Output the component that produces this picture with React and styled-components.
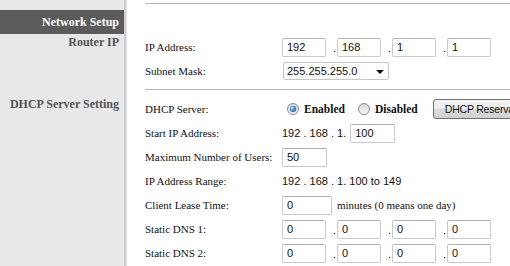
import React from "react";
import styled, { createGlobalStyle } from "styled-components";

const Global = createGlobalStyle`
  html, body { margin: 0; padding: 0; background: #ffffff; }
  body { font-family: "Liberation Serif", "Times New Roman", serif; color: #111; }
`;

const Page = styled.div`
  display: flex;
  height: 266px;
  width: 510px;
  overflow: hidden;
`;

const Sidebar = styled.div`
  flex: 0 0 124px;
  background: #e8e8e8;
  border-right: 2px solid #cfcfcf;
  box-shadow: 1px 0 1px #e4e4e4;
  padding-top: 10px;
  display: flex;
  flex-direction: column;
  font-family: "Liberation Serif", "Times New Roman", serif;
  font-weight: bold;
  font-size: 12px;
  text-align: right;
`;

const SideHeading = styled.div`
  background: #5b5b5b;
  color: #ffffff;
  height: 24px;
  line-height: 24px;
  padding-right: 5px;
`;

const SideItem = styled.div`
  color: #555555;
  line-height: 16px;
  padding-right: 5px;
  margin-top: ${(p) => p.$gap || 0}px;
`;

const Main = styled.div`
  flex: 1 1 auto;
  min-width: 0;
  padding: 3px 0 0 19px;
  overflow: hidden;
`;

const Rule = styled.div`
  height: 1px;
  background: #b4b4c4;
  margin-top: ${(p) => p.$top || 0}px;
  margin-right: -20px;
`;

const Section = styled.div`
  margin-top: ${(p) => p.$top || 0}px;
`;

const Row = styled.div`
  display: grid;
  grid-template-columns: 137px auto;
  align-items: center;
  height: 24px;
  white-space: nowrap;
`;

const Label = styled.div`
  font-family: "Liberation Serif", "Times New Roman", serif;
  font-size: 11px;
  color: #111;
`;

const Field = styled.div`
  display: flex;
  align-items: center;
  gap: ${(p) => p.$gap || 0}px;
`;

const Input = styled.input`
  box-sizing: border-box;
  width: ${(p) => p.$w || 44}px;
  height: 19px;
  margin: 0;
  padding: 0 4px;
  border: 1px solid #cacaca;
  border-top-color: #b2b2b2;
  border-radius: 2px;
  font-family: "Liberation Sans", Arial, sans-serif;
  font-size: 11px;
  color: #111;
  background: #fff;
  outline: none;
`;

const Dot = styled.span`
  box-sizing: border-box;
  width: 11px;
  padding-left: 7px;
  font-family: "Liberation Sans", Arial, sans-serif;
  font-size: 11px;
  line-height: 19px;
  padding-top: 2px;
`;

const Select = styled.div`
  box-sizing: border-box;
  width: 106px;
  height: 18px;
  margin-left: 1px;
  border: 1px solid #c6c6c6;
  border-radius: 2px;
  display: flex;
  align-items: center;
  justify-content: space-between;
  padding: 0 4px 0 3px;
  font-family: "Liberation Sans", Arial, sans-serif;
  font-size: 11px;
  color: #111;
  background: #fff;
`;

const Arrow = styled.span`
  width: 0;
  height: 0;
  border-left: 4px solid transparent;
  border-right: 4px solid transparent;
  border-top: 4px solid #111;
  margin-top: 2px;
`;

const Radio = styled.span`
  box-sizing: border-box;
  width: 12px;
  height: 12px;
  border-radius: 50%;
  border: 1px solid #8a8a8a;
  background: linear-gradient(#d6d6d6, #fbfbfb);
  display: inline-flex;
  align-items: center;
  justify-content: center;
  margin-left: ${(p) => p.$ml || 0}px;
  &::after {
    content: "";
    display: ${(p) => (p.$checked ? "block" : "none")};
    width: 6px;
    height: 6px;
    border-radius: 50%;
    background: radial-gradient(circle at 35% 35%, #bfe6ff 0%, #3d8fd8 45%, #10488a 100%);
    box-shadow: 0 0 1px #0c3a6e;
  }
`;

const RadioText = styled.span`
  font-family: "Liberation Serif", "Times New Roman", serif;
  font-weight: bold;
  font-size: 11.5px;
  margin-left: 5px;
  color: #111;
`;

const Button = styled.button`
  box-sizing: border-box;
  height: 20px;
  margin: 0 0 0 15px;
  padding: 0 11px;
  border: 1px solid #707070;
  border-radius: 3px;
  background: linear-gradient(#f3f3f3 0%, #ebebeb 50%, #dddddd 50%, #cfcfcf 100%);
  font-family: "Liberation Sans", Arial, sans-serif;
  font-size: 10.5px;
  letter-spacing: -0.2px;
  color: #111;
  white-space: nowrap;
  flex-shrink: 0;
`;

const Plain = styled.span`
  font-family: "Liberation Sans", Arial, sans-serif;
  font-size: 11px;
  color: #111;
`;

const Note = styled.span`
  font-family: "Liberation Serif", "Times New Roman", serif;
  font-size: 11px;
  color: #111;
  margin-left: 5px;
`;

const IpFields = ({ values }) => (
  <Field>
    {values.map((v, i) => (
      <React.Fragment key={i}>
        {i > 0 && <Dot>.</Dot>}
        <Input defaultValue={v} readOnly />
      </React.Fragment>
    ))}
  </Field>
);

export default function App() {
  return (
    <>
      <Global />
      <Page>
        <Sidebar>
          <SideHeading>Network Setup</SideHeading>
          <SideItem>Router IP</SideItem>
          <SideItem $gap={46}>DHCP Server Setting</SideItem>
        </Sidebar>
        <Main>
          <Rule />
          <Section $top={31}>
            <Row>
              <Label>IP Address:</Label>
              <IpFields values={["192", "168", "1", "1"]} />
            </Row>
            <Row>
              <Label>Subnet Mask:</Label>
              <Field>
                <Select>
                  <span>255.255.255.0</span>
                  <Arrow />
                </Select>
              </Field>
            </Row>
          </Section>
          <Rule $top={6} />
          <Section $top={7}>
            <Row>
              <Label>DHCP Server:</Label>
              <Field>
                <Radio $checked $ml={5} />
                <RadioText>Enabled</RadioText>
                <Radio $ml={13} />
                <RadioText>Disabled</RadioText>
                <Button type="button">DHCP Reservation</Button>
              </Field>
            </Row>
            <Row>
              <Label>Start IP Address:</Label>
              <Field $gap={4}>
                <Plain>192 . 168 . 1.</Plain>
                <Input $w={45} defaultValue="100" readOnly />
              </Field>
            </Row>
            <Row>
              <Label>Maximum Number of Users:</Label>
              <Field>
                <Input $w={45} defaultValue="50" readOnly />
              </Field>
            </Row>
            <Row>
              <Label>IP Address Range:</Label>
              <Field>
                <Plain>192 . 168 . 1. 100 to 149</Plain>
              </Field>
            </Row>
            <Row>
              <Label>Client Lease Time:</Label>
              <Field>
                <Input $w={50} defaultValue="0" readOnly />
                <Note>minutes (0 means one day)</Note>
              </Field>
            </Row>
            <Row>
              <Label>Static DNS 1:</Label>
              <IpFields values={["0", "0", "0", "0"]} />
            </Row>
            <Row>
              <Label>Static DNS 2:</Label>
              <IpFields values={["0", "0", "0", "0"]} />
            </Row>
          </Section>
        </Main>
      </Page>
    </>
  );
}
